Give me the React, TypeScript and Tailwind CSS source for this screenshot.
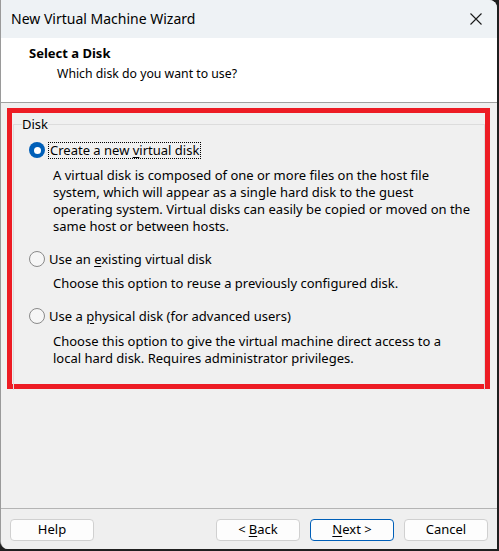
import React from "react";

function Radio({ checked }: { checked?: boolean }) {
  if (checked) {
    return (
      <span className="flex h-[16px] w-[16px] shrink-0 items-center justify-center rounded-full bg-[#005fb8]">
        <span className="h-[7px] w-[7px] rounded-full bg-white" />
      </span>
    );
  }
  return <span className="h-[16px] w-[16px] shrink-0 rounded-full border border-[#8a8a8a] bg-[#f6f6f6]" />;
}

function Button({ children, primary }: { children: React.ReactNode; primary?: boolean }) {
  return (
    <button
      className={
        primary
          ? "flex h-[22px] w-[84px] items-center justify-center rounded-[4px] border border-[#005fb8] bg-[#fdfdfd] text-[13px] text-black"
          : "flex h-[22px] w-[84px] items-center justify-center rounded-[4px] border border-[#d0d0d0] bg-[#fdfdfd] text-[13px] text-black"
      }
    >
      {children}
    </button>
  );
}

export default function App() {
  return (
    <div className="flex h-[551px] w-[499px] bg-[#1f1f1f] font-['Noto_Sans',sans-serif] text-[13px] text-black">
      <div className="flex h-[549px] w-[497px] flex-col overflow-hidden rounded-tr-[8px] rounded-bl-[8px] border-l border-[#9a9a9a] bg-[#f0f0f0]">
        {/* title bar */}
        <div className="flex h-[38px] shrink-0 items-center justify-between bg-[#eef2f5] pl-[10px] pr-[15px]">
          <span className="text-[14px] leading-[20px]">New Virtual Machine Wizard</span>
          <svg width="12" height="12" viewBox="0 0 12 12" className="mb-[1px]">
            <path d="M0.5 0.5 L11.5 11.5 M11.5 0.5 L0.5 11.5" stroke="#1a1a1a" strokeWidth="1.1" />
          </svg>
        </div>

        {/* header */}
        <div className="flex h-[64px] shrink-0 flex-col bg-white pl-[28px] pt-[7px]">
          <span className="text-[13px] font-bold leading-[17px]">Select a Disk</span>
          <span className="ml-[28px] mt-[3px] text-[12.25px] leading-[17px]">Which disk do you want to use?</span>
        </div>
        <div className="h-px shrink-0 bg-[#a0a0a0]" />

        {/* body */}
        <div className="flex-1 px-[6px] pt-[5px]">
          <div className="h-[281px] w-[483px] border-[5px] border-[#ed1c24]">
            <div className="ml-[1px] mt-[11px] flex h-[266px] flex-col border-l border-r border-t border-[#dcdcdc] pl-[15px]">
              <div className="-ml-[7px] -mt-[9px] w-fit bg-[#f0f0f0] leading-[17px]">Disk</div>

              <div className="mt-[7px] flex h-[20px] items-center gap-[3px]">
                <Radio checked />
                <span className="border border-dotted border-black px-px leading-[15px]">
                  Create a new <u className="underline-offset-2">v</u>irtual disk
                </span>
              </div>
              <p className="ml-[24px] mt-[7px] whitespace-nowrap leading-[17px]">
                A virtual disk is composed of one or more files on the host file
                <br />
                system, which will appear as a single hard disk to the guest
                <br />
                operating system. Virtual disks can easily be copied or moved on the
                <br />
                same host or between hosts.
              </p>

              <div className="mt-[14px] flex h-[20px] items-center gap-[4px]">
                <Radio />
                <span className="leading-[17px]">
                  Use an <u className="underline-offset-2">e</u>xisting virtual disk
                </span>
              </div>
              <p className="ml-[24px] mt-[6px] leading-[17px]">Choose this option to reuse a previously configured disk.</p>

              <div className="mt-[14px] flex h-[20px] items-center gap-[4px]">
                <Radio />
                <span className="leading-[17px]">
                  Use a <u className="underline-offset-2">p</u>hysical disk (for advanced users)
                </span>
              </div>
              <p className="ml-[24px] mt-[7px] whitespace-nowrap leading-[17px]">
                Choose this option to give the virtual machine direct access to a
                <br />
                local hard disk. Requires administrator privileges.
              </p>
            </div>
          </div>
        </div>

        {/* footer */}
        <div className="h-px shrink-0 bg-[#b4b4b4]" />
        <div className="flex h-[40px] shrink-0 items-start bg-[#efefef] px-[9px] pt-[10px]">
          <Button>Help</Button>
          <div className="ml-auto flex gap-[10px]">
            <Button>
              &lt; <u className="ml-[3px] underline-offset-2">B</u>ack
            </Button>
            <Button primary>
              <u className="underline-offset-2">N</u>ext &gt;
            </Button>
            <Button>Cancel</Button>
          </div>
        </div>
      </div>
    </div>
  );
}
